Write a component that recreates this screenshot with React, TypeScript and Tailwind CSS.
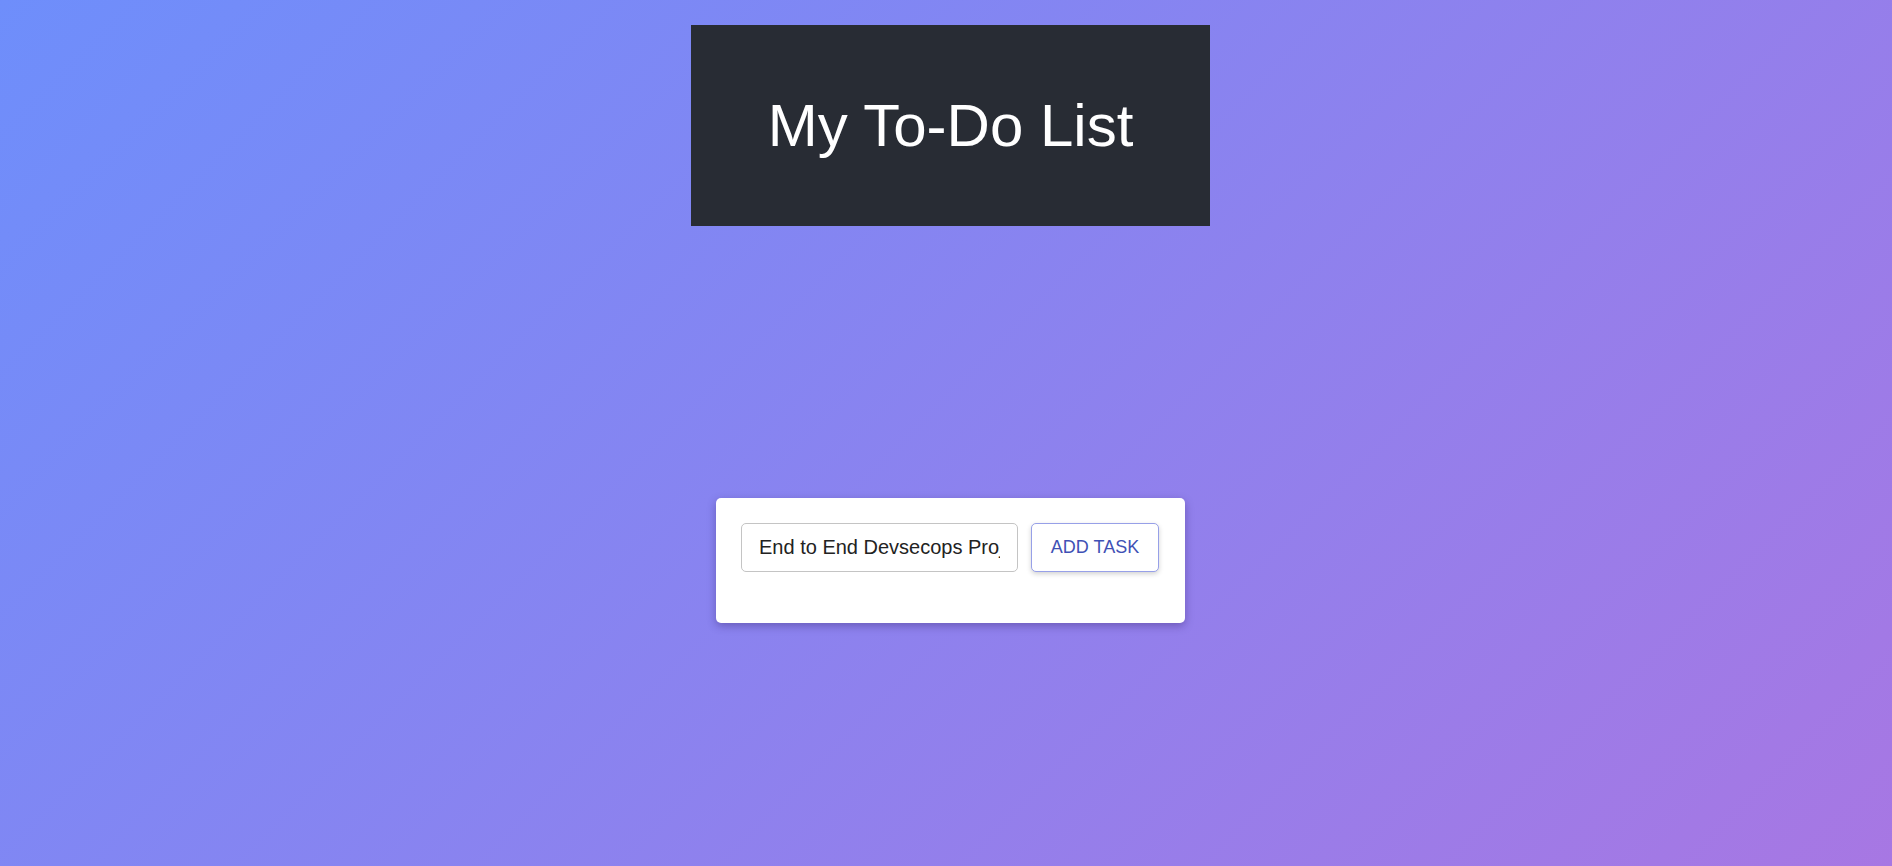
import { useState } from "react";

export default function App() {
  const [task, setTask] = useState("End to End Devsecops Project");

  return (
    <div className="min-h-screen w-full bg-[linear-gradient(135deg,#6e8efb,#a777e3)] font-['Liberation_Sans',Arial,sans-serif]">
      <div className="flex flex-col items-center pl-[9px]">
        <header className="mt-[25px] flex h-[201px] w-[519px] items-center justify-center bg-[#282c34]">
          <h1 className="text-[60px] leading-[1.15] text-white">My To-Do List</h1>
        </header>

        <div className="mt-[272px] h-[125px] w-[469px] rounded-[5px] bg-white p-[25px] shadow-[0_3px_8px_rgba(40,20,90,0.35)]">
          <div className="flex items-start gap-[13px]">
            <input
              type="text"
              value={task}
              onChange={(e) => setTask(e.target.value)}
              className="h-[49px] w-[277px] rounded-[5px] border border-[#c4c4c4] bg-white px-[17px] text-[20px] text-[#222] outline-none"
            />
            <button
              type="button"
              className="h-[49px] w-[128px] rounded-[5px] border border-[#97a0e8] bg-white text-[18px] uppercase text-[#3f51b5] shadow-[0_2px_5px_rgba(0,0,0,0.18)]"
            >
              Add Task
            </button>
          </div>
        </div>
      </div>
    </div>
  );
}
